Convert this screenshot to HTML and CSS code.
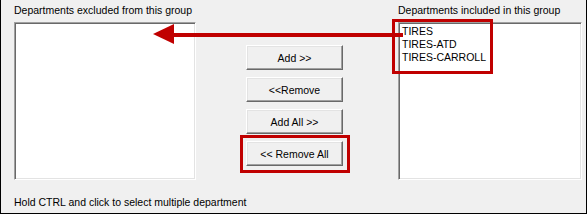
FILE: index.html
```html
<!DOCTYPE html>
<html>
<head>
<meta charset="utf-8">
<link rel="stylesheet" href="styles.css">
</head>
<body>
<div class="frame">
  <div class="cols">
    <div class="col col-left">
      <div class="label">Departments excluded from this group</div>
      <div class="listbox"></div>
    </div>
    <div class="mid">
      <button class="btn">Add &gt;&gt;</button>
      <button class="btn">&lt;&lt;Remove</button>
      <button class="btn">Add All &gt;&gt;</button>
      <button class="btn">&lt;&lt; Remove All</button>
    </div>
    <div class="col col-right">
      <div class="label">Departments included in this group</div>
      <div class="listbox">
        <div class="item">TIRES</div>
        <div class="item">TIRES-ATD</div>
        <div class="item">TIRES-CARROLL</div>
      </div>
    </div>
  </div>
  <div class="hint">Hold CTRL and click to select multiple department</div>

  <div class="callout callout-items"></div>
  <div class="callout callout-btn"></div>
  <svg class="arrow" width="250" height="24" viewBox="0 0 250 24">
    <rect x="18" y="9" width="232" height="4" fill="#c00000"/>
    <polygon points="0,10 21,0 21,20" fill="#c00000"/>
  </svg>
</div>
</body>
</html>
```

FILE: styles.css
```css
html, body {
  margin: 0;
  padding: 0;
  background: #f0f0f0;
}
body {
  font-family: "Liberation Sans", Arial, sans-serif;
  font-size: 10.5px;
  color: #000;
}
.frame {
  position: relative;
  width: 587px;
  height: 214px;
  box-sizing: border-box;
  border: 1px solid #000;
  border-top: none;
  background: #f0f0f0;
  padding: 4px 0 0 13px;
}
.cols {
  display: flex;
}
.col-left {
  width: 182px;
}
.col-right {
  width: 184px;
  margin-left: 55px;
}
.label {
  height: 18px;
  line-height: 13px;
  white-space: nowrap;
}
.listbox {
  height: 158px;
  box-sizing: border-box;
  background: #fff;
  border-top: 1px solid #a0a0a0;
  border-left: 1px solid #a0a0a0;
  border-right: 1px solid #fff;
  border-bottom: 1px solid #fff;
  box-shadow: inset 1px 1px 0 #696969, inset -1px -1px 0 #e3e3e3;
  padding: 2px 0 0 3px;
}
.item {
  line-height: 13px;
  height: 13px;
}
.mid {
  display: flex;
  flex-direction: column;
  gap: 7px;
  padding: 41px 0 0 50px;
  width: 97px;
}
.btn {
  width: 97px;
  height: 25px;
  box-sizing: border-box;
  background: #f0f0f0;
  font-family: "Liberation Sans", Arial, sans-serif;
  font-size: 10.5px;
  color: #000;
  padding: 0;
  border-top: 1px solid #fff;
  border-left: 1px solid #fff;
  border-right: 1px solid #696969;
  border-bottom: 1px solid #696969;
  box-shadow: inset -1px -1px 0 #a0a0a0, inset 1px 1px 0 #e3e3e3;
}
.hint {
  margin-top: 16px;
  line-height: 13px;
}
.callout {
  position: absolute;
  box-sizing: border-box;
  border: 3px solid #c00000;
}
.callout-items {
  left: 391px;
  top: 19px;
  width: 101px;
  height: 55px;
}
.callout-btn {
  left: 239px;
  top: 135px;
  width: 110px;
  height: 38px;
}
.arrow {
  position: absolute;
  left: 152px;
  top: 24px;
}
```
